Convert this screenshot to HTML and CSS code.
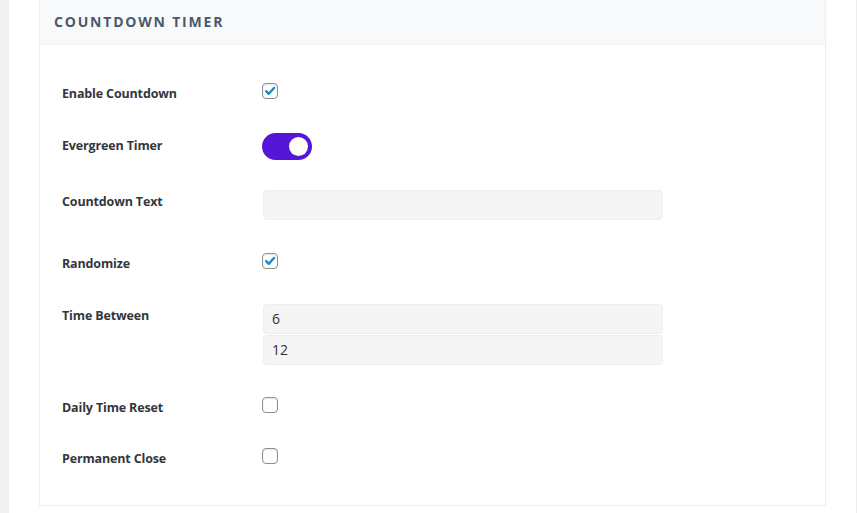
FILE: index.html
```html
<!DOCTYPE html>
<html lang="en">
<head>
<meta charset="utf-8">
<title>Countdown Timer</title>
<link rel="stylesheet" href="styles.css">
</head>
<body>
<div class="page">
  <div class="strip"></div>
  <div class="main">
    <section class="card">
      <header class="card-head">
        <h2 class="card-title">Countdown Timer</h2>
      </header>
      <div class="card-body">
        <div class="row row-first">
          <label class="label">Enable Countdown</label>
          <div class="control"><span class="check is-on"><svg viewBox="0 0 16 16"><path d="M3.6 8.2 L6.6 11.2 L12.6 4.6"/></svg></span></div>
        </div>
        <div class="row row-toggle">
          <label class="label">Evergreen Timer</label>
          <div class="control"><span class="toggle"><span class="knob"></span></span></div>
        </div>
        <div class="row row-input">
          <label class="label">Countdown Text</label>
          <div class="control"><div class="input"></div></div>
        </div>
        <div class="row">
          <label class="label">Randomize</label>
          <div class="control"><span class="check is-on"><svg viewBox="0 0 16 16"><path d="M3.6 8.2 L6.6 11.2 L12.6 4.6"/></svg></span></div>
        </div>
        <div class="row row-stack">
          <label class="label">Time Between</label>
          <div class="control stack">
            <div class="input">6</div>
            <div class="input">12</div>
          </div>
        </div>
        <div class="row">
          <label class="label">Daily Time Reset</label>
          <div class="control"><span class="check"></span></div>
        </div>
        <div class="row">
          <label class="label">Permanent Close</label>
          <div class="control"><span class="check"></span></div>
        </div>
      </div>
    </section>
  </div>
</div>
</body>
</html>
```

FILE: styles.css
```css
* { box-sizing: border-box; }
html, body { margin: 0; padding: 0; background: #ffffff; }
body { font-family: "Open Sans", "Noto Sans", sans-serif; color: #32373c; }

.page {
  display: flex;
  width: 857px;
  height: 513px;
  overflow: hidden;
}
.strip {
  width: 9px;
  flex: none;
  background: #f0f0f1;
}
.main {
  flex: none;
  width: 848px;
  border-right: 1px solid #ececec;
  padding-left: 30px;
  padding-right: 30px;
}

.card {
  border: 1px solid #eeeeee;
  border-top: none;
  background: #ffffff;
}
.card-head {
  background: #f8f9fb;
  height: 45px;
  display: flex;
  align-items: center;
  padding-left: 14px;
  border-bottom: 1px solid #f1f2f4;
}
.card-title {
  margin: 0;
  font-size: 14px;
  font-weight: 700;
  letter-spacing: 1.8px;
  text-transform: uppercase;
  color: #4a596d;
  line-height: 1;
}

.card-body {
  padding: 37px 22px 38px;
  display: flex;
  flex-direction: column;
  gap: 32px;
}
.row {
  display: flex;
  align-items: flex-start;
}
.row-first { margin-top: 1px; margin-bottom: -1px; }
.label {
  width: 200px;
  flex: none;
  font-size: 12.5px;
  font-weight: 700;
  line-height: 21px;
  margin-bottom: -2px;
  color: #32373c;
  letter-spacing: -0.15px;
}
.row-toggle .label { padding-top: 2px; }
.row-input .label,
.row-stack .label { padding-top: 1px; }
.control { display: flex; }
.stack { flex-direction: column; }

.check {
  width: 16px;
  height: 16px;
  border: 1px solid #8c8f94;
  border-radius: 4px;
  background: #ffffff;
  display: block;
  box-shadow: inset 0 1px 2px rgba(0,0,0,0.1);
}
.check svg { width: 14px; height: 14px; display: block; }
.check svg path {
  fill: none;
  stroke: #2188c2;
  stroke-width: 2.8;
  stroke-linecap: round;
  stroke-linejoin: round;
}

.toggle {
  width: 50px;
  height: 27px;
  border-radius: 14px;
  background: #5516d5;
  display: flex;
  align-items: center;
  justify-content: flex-end;
  padding-right: 4px;
  margin-bottom: -2px;
}
.knob {
  width: 19px;
  height: 19px;
  border-radius: 50%;
  background: #fcfff6;
}

.input {
  width: 400px;
  height: 30px;
  margin-left: 1px;
  background: #f5f5f5;
  border: 1px solid #eeeeee;
  border-radius: 4px;
  font-size: 14px;
  line-height: 28px;
  padding-left: 8px;
  color: #2c3338;
}
.row-input .input { margin-bottom: 1px; }
.stack .input + .input { margin-top: 1px; }
```
